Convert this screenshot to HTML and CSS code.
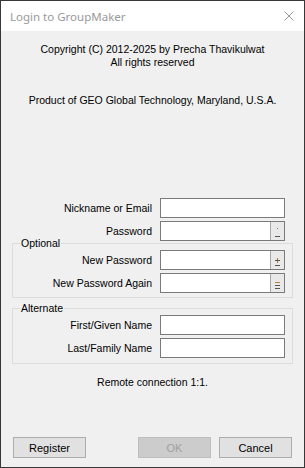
FILE: index.html
```html
<!DOCTYPE html>
<html lang="en">
<head>
  <meta charset="UTF-8">
  <title>Login to GroupMaker</title>
  <link rel="stylesheet" href="styles.css">
</head>
<body>
  <div class="window">
    <!-- title bar -->
    <div class="titlebar">
      <span class="title">Login to GroupMaker</span>
      <svg class="close" width="10" height="10" viewBox="0 0 10 10">
        <path d="M0.5 0.5 L9.5 9.5 M9.5 0.5 L0.5 9.5" stroke="#999" stroke-width="1" fill="none"/>
      </svg>
    </div>

    <div class="content">
      <div class="about">
        <p>Copyright (C) 2012-2025 by Precha Thavikulwat</p>
        <p>All rights reserved</p>
      </div>
      <p class="product">Product of GEO Global Technology, Maryland, U.S.A.</p>

      <div class="login">
        <div class="row">
          <label>Nickname or Email</label>
          <div class="box"></div>
        </div>
        <div class="row">
          <label>Password</label>
          <div class="box">
            <span class="spin">
              <svg width="13" height="18" viewBox="0 0 13 18">
                <rect x="6" y="6" width="1" height="1" fill="#5b7fb5"/>
                <rect x="4" y="14" width="5" height="1" fill="#555"/>
              </svg>
            </span>
          </div>
        </div>
      </div>

      <!-- optional -->
      <fieldset class="group optional">
        <legend>Optional</legend>
        <div class="row">
          <label>New Password</label>
          <div class="box">
            <span class="spin">
              <svg width="13" height="18" viewBox="0 0 13 18">
                <rect x="6" y="7" width="1" height="5" fill="#b07a3a"/>
                <rect x="4" y="9" width="5" height="1" fill="#555"/>
                <rect x="4" y="14" width="5" height="1" fill="#555"/>
              </svg>
            </span>
          </div>
        </div>
        <div class="row">
          <label>New Password Again</label>
          <div class="box">
            <span class="spin">
              <svg width="13" height="18" viewBox="0 0 13 18">
                <rect x="4" y="8" width="5" height="1" fill="#c0803a"/>
                <rect x="4" y="11" width="5" height="1" fill="#555"/>
                <rect x="4" y="14" width="5" height="1" fill="#555"/>
              </svg>
            </span>
          </div>
        </div>
      </fieldset>

      <!-- alternate -->
      <fieldset class="group alternate">
        <legend>Alternate</legend>
        <div class="row">
          <label>First/Given Name</label>
          <div class="box"></div>
        </div>
        <div class="row">
          <label>Last/Family Name</label>
          <div class="box"></div>
        </div>
      </fieldset>

      <p class="remote">Remote connection 1:1.</p>

      <div class="buttons">
        <button>Register</button>
        <span class="spacer"></span>
        <button disabled>OK</button>
        <button>Cancel</button>
      </div>
    </div>
  </div>
</body>
</html>
```

FILE: styles.css
```css
/* reset */
* {
  box-sizing: border-box;
}
body {
  margin: 0;
  padding: 0;
  font-family: "Liberation Sans", Arial, sans-serif;
  font-size: 10.5px;
  color: #000;
}
p {
  margin: 0;
}

.window {
  width: 305px;
  height: 468px;
  border: 1px solid #373737;
  display: flex;
  flex-direction: column;
}

/* title bar */
.titlebar {
  height: 30px;
  background: #fff;
  display: flex;
  align-items: center;
  padding-left: 9px;
  padding-right: 10px;
}
.titlebar .title {
  font-family: "Noto Sans", "Open Sans", sans-serif;
  font-size: 11.5px;
  color: #999;
  flex: 1;
}
.titlebar .close {
  display: block;
}

.content {
  flex: 1;
  background: #f0f0f0;
  display: flex;
  flex-direction: column;
  line-height: 13px;
}

.about {
  text-align: center;
  padding-top: 12px;
}
.product {
  text-align: center;
  margin-top: 25px;
}

.login {
  margin-top: 91px;
}

.row {
  display: flex;
  align-items: center;
  height: 20px;
  margin-top: 3px;
}
.row:first-child {
  margin-top: 0;
}
.row label {
  width: 151px;
  margin-right: 8px;
  text-align: right;
}
.group .row label {
  width: 139px;
}
.group legend + .row {
  margin-top: 0;
}

.box {
  width: 125px;
  height: 20px;
  border: 1px solid #7a7a7a;
  background: #fff;
  display: flex;
  justify-content: flex-end;
}
.spin {
  width: 14px;
  height: 18px;
  border-left: 1px solid #a8a8a8;
  background: #e9e9e9;
}
.spin svg {
  display: block;
}

/* group boxes */
.group {
  margin: 0 11px;
  padding: 0;
  border: 1px solid #dcdcdc;
  min-width: 0;
}
.group legend {
  margin-left: 7px;
  padding: 0 1px;
  line-height: 13px;
}
.optional {
  margin-top: -4px;
  padding-bottom: 4px;
}
.alternate {
  margin-top: 4px;
  padding-bottom: 5px;
}

.remote {
  text-align: center;
  margin-top: 12px;
}

/* buttons */
.buttons {
  margin-top: auto;
  display: flex;
  padding: 0 12px 9px 12px;
}
.buttons .spacer {
  flex: 1;
}
button {
  width: 73px;
  height: 21px;
  margin-left: 8px;
  font-family: "Liberation Sans", Arial, sans-serif;
  font-size: 11px;
  color: #000;
  background: #e1e1e1;
  border: 1px solid #adadad;
  padding: 0;
}
button:first-child {
  margin-left: 0;
}
button:disabled {
  background: #cccccc;
  border-color: #bfbfbf;
  color: #a0a0a0;
}
```
